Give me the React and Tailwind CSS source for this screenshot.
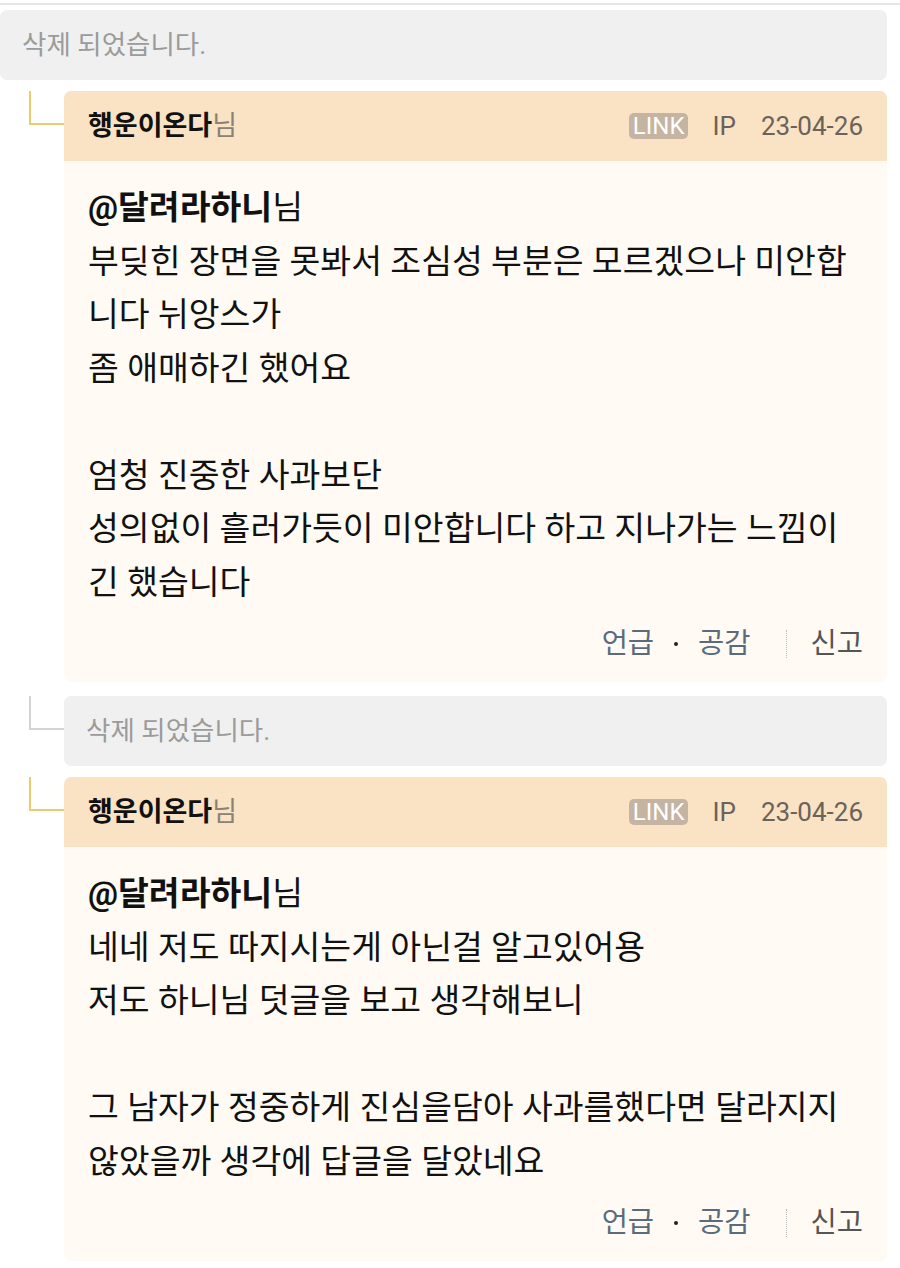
import React from "react";

const FONT = { fontFamily: '"Roboto", "Noto Sans CJK KR", "Noto Sans", sans-serif' };

function Deleted({ className = "" }) {
  return (
    <div className={`h-[70px] bg-[#f0f0f0] rounded-[7px] flex items-center pl-[22px] text-[26.5px] text-[#9b9b9b] ${className}`}>
      삭제 되었습니다.
    </div>
  );
}

function Connector({ color }) {
  return (
    <div className="w-[64px] shrink-0">
      <div className={`ml-[29px] w-[35px] h-[34px] border-l-2 border-b-2 ${color}`} />
    </div>
  );
}

function Card({ lines }) {
  return (
    <div className="flex-1 rounded-[7px] overflow-hidden">
      <div className="h-[70px] bg-[#f9e3c4] flex items-center justify-between pl-[24px] pr-[24px]">
        <div className="text-[27px] text-[#111]">
          <span className="font-bold">행운이온다</span>
          <span className="text-[#8a8177]">님</span>
        </div>
        <div className="flex items-center text-[26px] text-[#6b625a]">
          <span className="bg-[#c4b4a1] text-white rounded-[5px] px-[4px] h-[26px] leading-[26px] text-[24px]">LINK</span>
          <span className="ml-[24px]">IP</span>
          <span className="ml-[25px]">23-04-26</span>
        </div>
      </div>
      <div className="bg-[#fffbf4] pt-[20px] pb-[18px] pl-[24px] pr-[24px]">
        <div className="text-[33.5px] leading-[53.5px] text-[#111] whitespace-nowrap">
          <div>
            <span className="font-bold">@달려라하니</span>
            <span>님</span>
          </div>
          {lines.map((l, i) => (
            <div key={i} className="h-[53.5px]">{l}</div>
          ))}
        </div>
        <div className="mt-[15px] h-[40px] flex items-center justify-end text-[28.5px]">
          <span className="text-[#5b6b7c]">언급</span>
          <span className="mx-[20px] w-[4px] h-[4px] rounded-full bg-[#222]" />
          <span className="text-[#5b6b7c]">공감</span>
          <span className="ml-[35px] mr-[24px] h-[28px] border-l border-dotted border-[#bbb]" />
          <span className="text-[#555]">신고</span>
        </div>
      </div>
    </div>
  );
}

export default function App() {
  return (
    <div className="w-[900px] h-[1268px] bg-white overflow-hidden" style={FONT}>
      <div className="pt-[3px]">
        <div className="h-[2px] bg-[#e6e6e6]" />
      </div>
      <div className="pr-[13px]">
        <Deleted className="mt-[5px]" />
        <div className="flex mt-[11px]">
          <Connector color="border-[#e9cd6c]" />
          <Card
            lines={[
              "부딪힌 장면을 못봐서 조심성 부분은 모르겠으나 미안합",
              "니다 뉘앙스가",
              "좀 애매하긴 했어요",
              "",
              "엄청 진중한 사과보단",
              "성의없이 흘러가듯이 미안합니다 하고 지나가는 느낌이",
              "긴 했습니다",
            ]}
          />
        </div>
        <div className="flex mt-[14px]">
          <Connector color="border-[#d4d4d4]" />
          <Deleted className="flex-1" />
        </div>
        <div className="flex mt-[11px]">
          <Connector color="border-[#e9cd6c]" />
          <Card
            lines={[
              "네네 저도 따지시는게 아닌걸 알고있어용",
              "저도 하니님 덧글을 보고 생각해보니",
              "",
              "그 남자가 정중하게 진심을담아 사과를했다면 달라지지",
              "않았을까 생각에 답글을 달았네요",
            ]}
          />
        </div>
      </div>
    </div>
  );
}
